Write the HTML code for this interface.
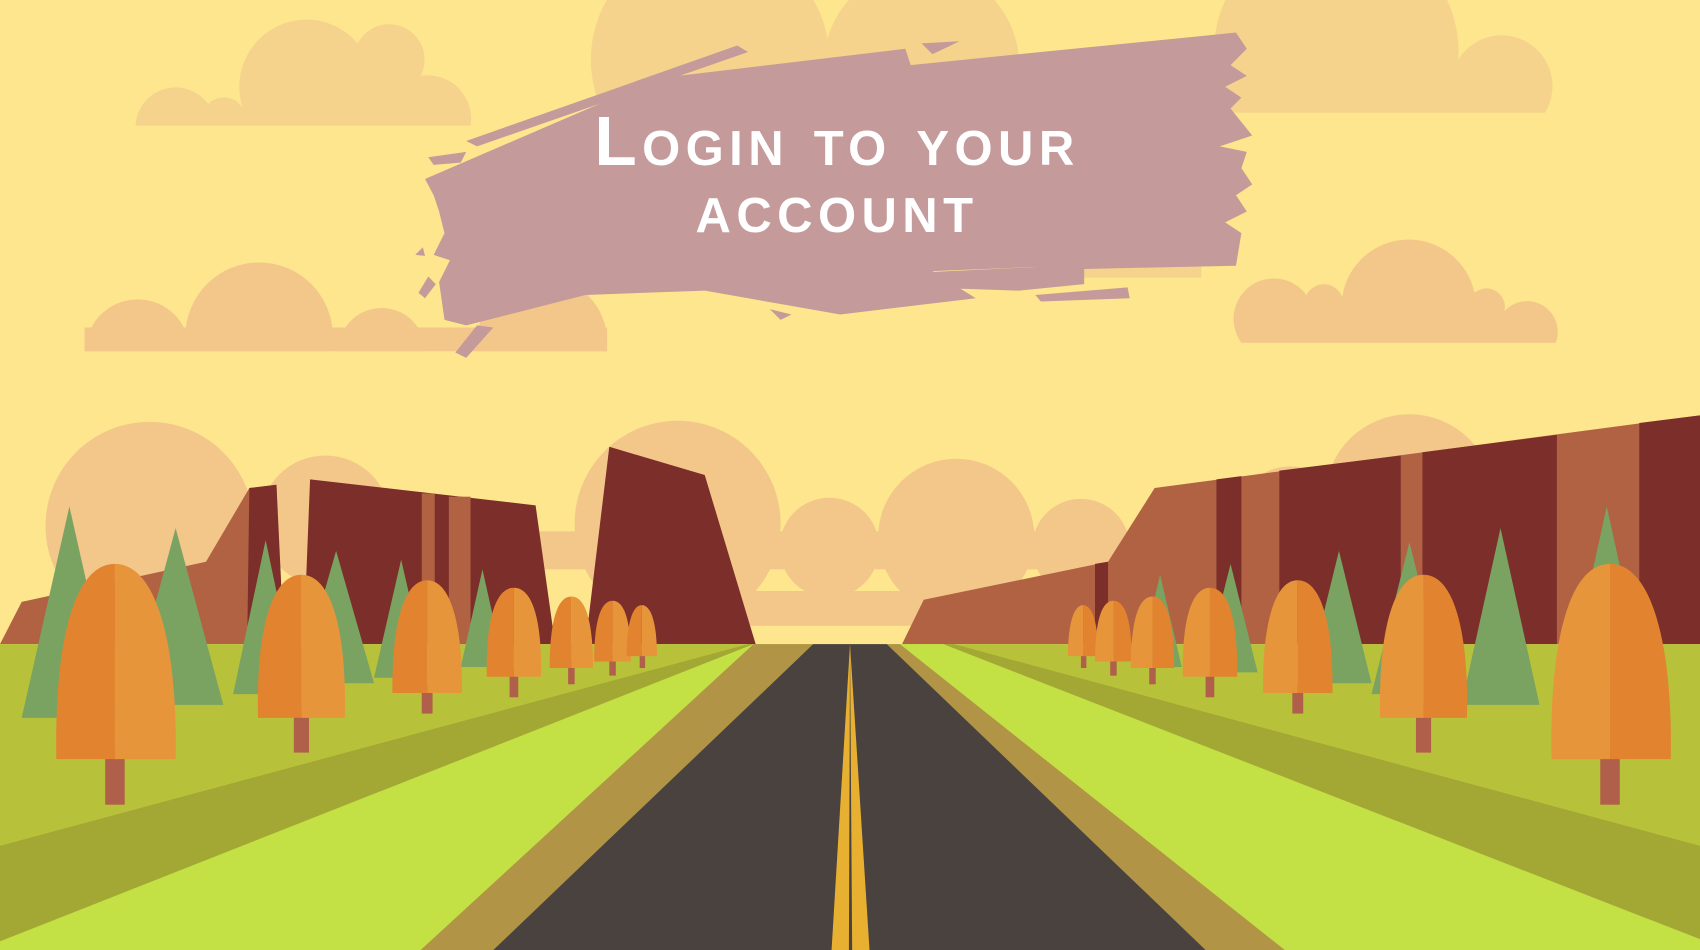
<!DOCTYPE html>
<html><head><meta charset="utf-8"><style>
html,body{margin:0;padding:0;width:1700px;height:950px;overflow:hidden;background:#fde68e}
svg{display:block}
</style></head><body>
<svg width="1700" height="950" viewBox="0 0 1568 876" preserveAspectRatio="none" xmlns="http://www.w3.org/2000/svg">
<rect width="1568" height="876" fill="#fde68e"/>
<g fill="#f5d38c">
<path d="M125,116 A37,37 0 0 1 192,96 A20,20 0 0 1 224,100 A62,62 0 0 1 330,40 A30,30 0 0 1 388,70 A40,40 0 0 1 434,116 Z"/>
<circle cx="655" cy="55" r="110"/><circle cx="850" cy="60" r="90"/>
<path d="M1120,104 L1120,40 A110,110 0 0 1 1345,55 A40,40 0 0 1 1425,104 Z"/>
<rect x="1000" y="180" width="108" height="76"/>
</g>
<g fill="#f3c68a">
<circle cx="127" cy="324" r="48"/><circle cx="239" cy="310" r="68"/><circle cx="352" cy="324" r="40"/><circle cx="500" cy="315" r="60"/>
<rect x="78" y="302" width="482" height="22"/>
<path d="M1145,316 A36,36 0 0 1 1205,272 A18,18 0 0 1 1238,274 A62,62 0 0 1 1360,270 A14,14 0 0 1 1382,296 A27,27 0 0 1 1435,316 Z"/>
<circle cx="138" cy="485" r="96"/><circle cx="300" cy="480" r="60"/>
<circle cx="625" cy="483" r="95"/><circle cx="765" cy="505" r="46"/>
<circle cx="882" cy="495" r="72"/><circle cx="997" cy="505" r="45"/>
<circle cx="1300" cy="460" r="78"/><circle cx="1190" cy="480" r="50"/>
<rect x="480" y="490" width="560" height="35"/>
<rect x="560" y="545" width="450" height="32"/>
</g>
<rect x="0" y="324" width="600" height="60" fill="#fde68e"/>
<g>
<path d="M0,594 L20,555 L190,518 L230,450 L255,447 L260,594 Z" fill="#b06243"/>
<path d="M230,450 L255,447 L262,594 L228,594 Z" fill="#7b2e2a"/>
<path d="M286,442 L494,466 L512,594 L280,594 Z" fill="#7b2e2a"/>
<rect x="389" y="455" width="12" height="139" fill="#b06243"/>
<rect x="414" y="458" width="20" height="136" fill="#b06243"/>
<path d="M562,412 L650,438 L697,594 L540,594 Z" fill="#7b2e2a"/>
<path d="M852,553 L1022,518 L1065,450 L1568,383 L1568,594 L832,594 Z" fill="#b06243"/>
<path d="M1122,442 L1145,439 L1145,594 L1122,594 Z" fill="#7b2e2a"/>
<path d="M1180,434 L1292,420 L1292,594 L1180,594 Z" fill="#7b2e2a"/>
<path d="M1312,417 L1436,401 L1436,594 L1312,594 Z" fill="#7b2e2a"/>
<path d="M1512,390 L1568,383 L1568,594 L1512,594 Z" fill="#7b2e2a"/>
<path d="M1010,520 L1022,518 L1022,594 L1010,594 Z" fill="#7b2e2a"/>
</g>
<rect x="0" y="594" width="1568" height="282" fill="#b8c13a"/>
<path d="M0,780 L690,594 L700,594 L0,868 Z" fill="#a3a733"/>
<path d="M1568,780 L880,594 L870,594 L1568,868 Z" fill="#a3a733"/>
<path d="M0,868 L695,594 L750,594 L388,876 L0,876 Z" fill="#c3e045"/>
<path d="M1568,866 L870,594 L818,594 L1185,876 L1568,876 Z" fill="#c3e045"/>
<path d="M695,594 L750,594 L455,876 L388,876 Z" fill="#b29447"/>
<path d="M818,594 L830,594 L1185,876 L1112,876 Z" fill="#b29447"/>
<path d="M750,594 L818,594 L1112,876 L455,876 Z" fill="#4a423e"/>
<path d="M784,594 L767,876 L802,876 Z" fill="#e8b030"/>
<path d="M784,594 L783,876 L786,876 Z" fill="#4a423e"/>
<g fill="#7aa362">
<path d="M64,467 L108,662 L20,662 Z"/><path d="M162,487 L206,650 L118,650 Z"/>
<path d="M245,498 L275,640 L215,640 Z"/><path d="M310,508 L345,630 L275,630 Z"/>
<path d="M370,516 L395,625 L345,625 Z"/><path d="M445,525 L465,615 L425,615 Z"/>
<path d="M1070,530 L1090,615 L1050,615 Z"/><path d="M1135,520 L1160,620 L1110,620 Z"/>
<path d="M1235,508 L1265,630 L1205,630 Z"/><path d="M1300,500 L1335,640 L1265,640 Z"/>
<path d="M1384,487 L1420,650 L1348,650 Z"/><path d="M1482,467 L1520,640 L1444,640 Z"/>
</g>
<g>
<g transform="translate(106,520)"><rect x="-9" y="170" width="18" height="52" fill="#b0604a"/><path d="M0,0 C-40,0 -56,80 -54,180 L0,180 Z" fill="#e2832f"/><path d="M0,0 C40,0 58,80 56,180 L0,180 Z" fill="#e6953a"/></g>
<g transform="translate(278,530)"><rect x="-7" y="120" width="14" height="44" fill="#b0604a"/><path d="M0,0 C-30,0 -42,60 -40,132 L0,132 Z" fill="#e2832f"/><path d="M0,0 C30,0 42,60 40,132 L0,132 Z" fill="#e6953a"/></g>
<g transform="translate(394,535)"><rect x="-5" y="95" width="10" height="28" fill="#b0604a"/><path d="M0,0 C-24,0 -33,50 -32,104 L0,104 Z" fill="#e2832f"/><path d="M0,0 C24,0 33,50 32,104 L0,104 Z" fill="#e6953a"/></g>
<g transform="translate(474,542)"><rect x="-4" y="75" width="8" height="26" fill="#b0604a"/><path d="M0,0 C-20,0 -26,40 -25,82 L0,82 Z" fill="#e2832f"/><path d="M0,0 C20,0 26,40 25,82 L0,82 Z" fill="#e6953a"/></g>
<g transform="translate(527,550)"><rect x="-3" y="60" width="6" height="21" fill="#b0604a"/><path d="M0,0 C-15,0 -20,30 -20,66 L0,66 Z" fill="#e2832f"/><path d="M0,0 C15,0 20,30 20,66 L0,66 Z" fill="#e6953a"/></g>
<g transform="translate(565,554)"><rect x="-3" y="50" width="6" height="19" fill="#b0604a"/><path d="M0,0 C-13,0 -17,26 -17,56 L0,56 Z" fill="#e2832f"/><path d="M0,0 C13,0 17,26 17,56 L0,56 Z" fill="#e6953a"/></g>
<g transform="translate(592,558)"><rect x="-2" y="42" width="5" height="16" fill="#b0604a"/><path d="M0,0 C-10,0 -14,22 -14,47 L0,47 Z" fill="#e2832f"/><path d="M0,0 C10,0 14,22 14,47 L0,47 Z" fill="#e6953a"/></g>
<g transform="translate(999,558)"><rect x="-2" y="42" width="5" height="16" fill="#b0604a"/><path d="M0,0 C-10,0 -14,22 -14,47 L0,47 Z" fill="#e6953a"/><path d="M0,0 C10,0 14,22 14,47 L0,47 Z" fill="#e2832f"/></g>
<g transform="translate(1027,554)"><rect x="-3" y="50" width="6" height="19" fill="#b0604a"/><path d="M0,0 C-13,0 -17,26 -17,56 L0,56 Z" fill="#e6953a"/><path d="M0,0 C13,0 17,26 17,56 L0,56 Z" fill="#e2832f"/></g>
<g transform="translate(1063,550)"><rect x="-3" y="60" width="6" height="21" fill="#b0604a"/><path d="M0,0 C-15,0 -20,30 -20,66 L0,66 Z" fill="#e6953a"/><path d="M0,0 C15,0 20,30 20,66 L0,66 Z" fill="#e2832f"/></g>
<g transform="translate(1116,542)"><rect x="-4" y="75" width="8" height="26" fill="#b0604a"/><path d="M0,0 C-20,0 -26,40 -25,82 L0,82 Z" fill="#e6953a"/><path d="M0,0 C20,0 26,40 25,82 L0,82 Z" fill="#e2832f"/></g>
<g transform="translate(1197,535)"><rect x="-5" y="95" width="10" height="28" fill="#b0604a"/><path d="M0,0 C-24,0 -33,50 -32,104 L0,104 Z" fill="#e6953a"/><path d="M0,0 C24,0 33,50 32,104 L0,104 Z" fill="#e2832f"/></g>
<g transform="translate(1313,530)"><rect x="-7" y="120" width="14" height="44" fill="#b0604a"/><path d="M0,0 C-30,0 -42,60 -40,132 L0,132 Z" fill="#e6953a"/><path d="M0,0 C30,0 42,60 40,132 L0,132 Z" fill="#e2832f"/></g>
<g transform="translate(1485,520)"><rect x="-9" y="170" width="18" height="52" fill="#b0604a"/><path d="M0,0 C-40,0 -56,80 -54,180 L0,180 Z" fill="#e6953a"/><path d="M0,0 C40,0 58,80 56,180 L0,180 Z" fill="#e2832f"/></g>
</g>
<g fill="#c49a9a">
<path d="M392,165 L608,72 L835,45 L840,60 L1120,32 L1140,30 L1150,45 L1135,60 L1150,70 L1130,80 L1145,90 L1135,100 L1155,125 L1125,135 L1150,140 L1145,155 L1155,170 L1140,180 L1150,195 L1130,205 L1145,215 L1140,245 L1000,248 L1000,262 L940,268 L850,265 L835,252 L960,246 L860,250 L900,275 L775,290 L650,268 L540,272 L430,300 L410,295 L405,260 L415,240 L400,235 L410,215 L405,195 L400,180 Z"/>
<path d="M430,130 L680,42 L690,48 L440,135 Z"/>
<path d="M395,145 L430,140 L425,150 L400,152 Z"/>
<path d="M420,325 L440,300 L455,302 L430,330 Z"/>
<path d="M386,270 L395,255 L402,262 L392,275 Z"/>
<path d="M383,235 L390,228 L392,236 Z"/>
<path d="M955,272 L1040,265 L1042,275 L960,278 Z"/>
<path d="M710,285 L730,290 L720,295 Z"/>
<path d="M850,40 L885,38 L860,50 Z"/>
</g>
<text x="772" y="152" text-anchor="middle" fill="#fff" font-family="Liberation Sans, sans-serif" font-weight="bold" font-size="64" style="font-variant:small-caps" letter-spacing="5">Login to your</text>
<text x="772" y="214" text-anchor="middle" fill="#fff" font-family="Liberation Sans, sans-serif" font-weight="bold" font-size="64" style="font-variant:small-caps" letter-spacing="5">account</text>
</svg>
</body></html>
